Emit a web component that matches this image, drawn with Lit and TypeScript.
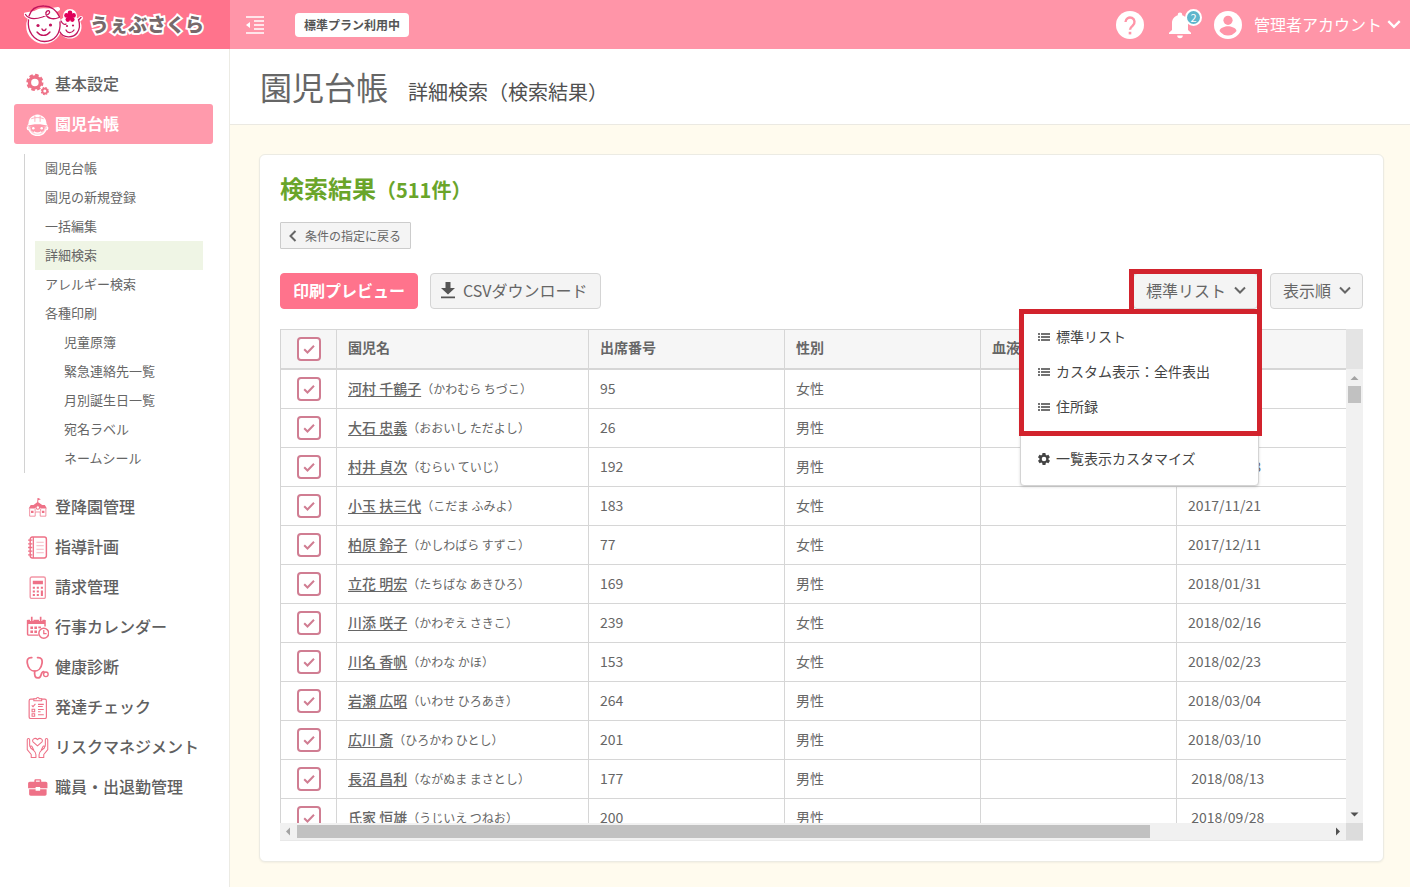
import { LitElement, html, css, svg, nothing, TemplateResult } from "lit";
import { customElement, state } from "lit/decorators.js";
import { classMap } from "lit/directives/class-map.js";

interface Child {
  name: string;
  kana: string;
  no: string;
  sex: string;
  birth: string;
}

const CHILDREN: Child[] = [
  { name: "河村 千鶴子", kana: "かわむら ちづこ", no: "95", sex: "女性", birth: "2017/04/18" },
  { name: "大石 忠義", kana: "おおいし ただよし", no: "26", sex: "男性", birth: "2017/08/02" },
  { name: "村井 貞次", kana: "むらい ていじ", no: "192", sex: "男性", birth: "2017/10/28" },
  { name: "小玉 扶三代", kana: "こだま ふみよ", no: "183", sex: "女性", birth: "2017/11/21" },
  { name: "柏原 鈴子", kana: "かしわばら すずこ", no: "77", sex: "女性", birth: "2017/12/11" },
  { name: "立花 明宏", kana: "たちばな あきひろ", no: "169", sex: "男性", birth: "2018/01/31" },
  { name: "川添 咲子", kana: "かわぞえ さきこ", no: "239", sex: "女性", birth: "2018/02/16" },
  { name: "川名 香帆", kana: "かわな かほ", no: "153", sex: "女性", birth: "2018/02/23" },
  { name: "岩瀬 広昭", kana: "いわせ ひろあき", no: "264", sex: "男性", birth: "2018/03/04" },
  { name: "広川 斎", kana: "ひろかわ ひとし", no: "201", sex: "男性", birth: "2018/03/10" },
  { name: "長沼 昌利", kana: "ながぬま まさとし", no: "177", sex: "男性", birth: " 2018/08/13" },
  { name: "氏家 恒雄", kana: "うじいえ つねお", no: "200", sex: "男性", birth: " 2018/09/28" },
];

const SUB_MENU = [
  { label: "園児台帳" },
  { label: "園児の新規登録" },
  { label: "一括編集" },
  { label: "詳細検索", current: true },
  { label: "アレルギー検索" },
  { label: "各種印刷" },
  { label: "児童原簿", nested: true },
  { label: "緊急連絡先一覧", nested: true },
  { label: "月別誕生日一覧", nested: true },
  { label: "宛名ラベル", nested: true },
  { label: "ネームシール", nested: true },
];

const icon = (cls: string, box: string, body: TemplateResult | unknown) =>
  html`<svg class=${cls} viewBox=${box} aria-hidden="true">${body}</svg>`;

const gear = svg`<path fill="currentColor" fill-rule="evenodd" d="M19.4 13c.1-.3.1-.7.1-1s0-.7-.1-1l2.100-1.600c.2-.2.2-.4.100-.6l-2-3.500c-.1-.2-.4-.3-.6-.2l-2.500 1c-.5-.4-1.100-.7-1.700-1l-.4-2.600c0-.3-.2-.5-.5-.5h-4c-.3 0-.5.2-.5.400l-.4 2.700c-.6.2-1.100.6-1.700 1l-2.500-1c-.2-.1-.5 0-.6.200l-2 3.500c-.1.2-.1.500.1.600L4.500 11c0 .3-.1.700-.1 1s0 .7.1 1l-2.100 1.600c-.2.2-.2.400-.1.600l2 3.500c.1.200.4.300.6.200l2.500-1c.5.400 1.100.7 1.700 1l.4 2.600c0 .3.2.5.5.5h4c.3 0 .5-.2.5-.4l.4-2.700c.6-.2 1.100-.6 1.700-1l2.500 1c.2.100.5 0 .6-.2l2-3.500c.1-.2.1-.5-.1-.6zM12 8.200a3.800 3.800 0 1 1 0 7.600 3.800 3.800 0 0 1 0-7.600z"/>`;

const ICONS: Record<string, unknown> = {
  settings: svg`
    <g fill="none" stroke="currentColor">
      <circle cx="8.500" cy="9" r="5.200" stroke-width="3.200"/>
      <circle cx="8.500" cy="9" r="7.200" stroke-width="2" stroke-dasharray="3.400 2.255"/>
      <circle cx="18" cy="17.300" r="2.300" stroke-width="1.700"/>
      <circle cx="18" cy="17.300" r="3.300" stroke-width="1.200" stroke-dasharray="1.600 .992"/>
    </g>`,
  child: svg`
    <path fill="currentColor" d="M2.300 10.500C2.500 5 6 2 11 1.500c5 .5 8.500 3.500 8.700 9l1.300 1.700c-6-2-14-2-20 0z"/>
    <path d="M8.500 2.500v6M13.500 2.500v6M5 5.500c4-1.500 8-1.500 12 0" stroke="#ff9aac" stroke-width=".7" fill="none"/>
    <path d="M2.500 13c-1.700 0-1.800 3 .5 3.200C4.500 19.500 7.500 21.500 11 21.500s6.500-2 8-5.300c2.300-.2 2.200-3.200.5-3.200" fill="currentColor" fill-opacity=".55" stroke="currentColor" stroke-width="1.300"/>
    <path d="M4 13.500c2-1.800 12-1.800 14 0l-1 3c-2 3-10 3-12 0z" fill="#ff9aac"/>
    <circle cx="7" cy="14.700" r="1.200" fill="currentColor"/><circle cx="15" cy="14.700" r="1.200" fill="currentColor"/>
    <path d="M7.500 18c2 1.500 5 1.500 7 0" fill="none" stroke="currentColor" stroke-width="1.200"/>`,
  school: svg`
    <path fill="currentColor" d="M11 2h.7l2.500 1.100-2.500 1V6l3.800 2.700H18l2 3.300h-5.500L11.300 9.500 8 12H2.500l2-3.300h2.700L10.700 6z"/>
    <path fill="none" stroke="currentColor" stroke-opacity=".8" stroke-width=".9" d="M3.500 12v7.300h5.300v-4h4.800v4H19V12M8.700 12v3M14 12v3"/>
    <path fill="currentColor" d="M4.800 14h2.400v2.200H4.800zM15.200 14h2.400v2.200h-2.400z"/>
    <circle cx="11.300" cy="11" r="1.700" fill="#fff" stroke="currentColor"/>`,
  notebook: svg`
    <rect x="4" y="1" width="15.500" height="20" rx="2" fill="none" stroke="currentColor" stroke-width="1.400"/>
    <path d="M7 1v20M2 4h4M2 7.500h4M2 11h4M2 14.500h4M2 18h4" fill="none" stroke="currentColor" stroke-width="1.200"/>
    <path d="M10 6h7M10 9.300h7M10 12.700h7M10 16h7" stroke="currentColor" stroke-opacity=".6" stroke-width=".8"/>`,
  calculator: svg`
    <rect x="4" y="1" width="14.500" height="20.500" rx="1.500" fill="none" stroke="currentColor" stroke-opacity=".75" stroke-width="1.300"/>
    <path fill="currentColor" d="M6.500 4.500h9.700V8H6.500zM6.500 10.300h2v2h-2zM10.300 10.300h2v2h-2zM14.200 10.300h2v2h-2zM6.500 13.800h2v2h-2zM10.300 13.800h2v2h-2zM6.500 17.200h2v2h-2zM10.300 17.200h2v2h-2zM14.200 13.800h2v5.400h-2z"/>`,
  calendar: svg`
    <path d="M12 18.300H2.500a1 1 0 0 1-1-1V4.500h16.700V10" fill="none" stroke="currentColor" stroke-width="1.400"/>
    <path fill="currentColor" d="M1.500 3.500h16.700v4.200H1.500zM4.200 10h2.500v2.500H4.200zM8 10h2.500v2.500H8zM11.800 10h2.500v1.800h-2.500zM4.200 13.800h2.500v2.500H4.200zM8 13.800h2.500v2.500H8z"/>
    <path d="M5.500 .8v4M14 .8v4" stroke="#fff" stroke-width="3.200"/><path d="M5.500 .8v4M14 .8v4" stroke="currentColor" stroke-width="1.600"/>
    <circle cx="17" cy="16.500" r="4.700" fill="#fff" stroke="currentColor" stroke-width="1.400"/>
    <path d="M17 13.500v3.300h2.700" fill="none" stroke="currentColor" stroke-width="1.200"/>`,
  stethoscope: svg`
    <g fill="none" stroke="currentColor" stroke-width="1.700" stroke-linecap="round">
      <path d="M5.500 1.500C1.500 1.200.8 4 1.300 7c.7 4.500 3.500 7.500 7 7.500s6.300-3 7-7.500c.5-3-.2-5.800-4.200-5.500"/>
      <path d="M8.300 14.500c-.5 5 .7 6.500 3.200 6.500 4 0 2-6 5.500-6"/>
      <circle cx="19" cy="17.500" r="2.200" stroke-width="1.300"/>
    </g>`,
  checklist: svg`
    <rect x="3" y="3" width="16.500" height="18.500" rx="1.500" fill="none" stroke="currentColor" stroke-width="1.100"/>
    <path d="M7.500 4.500V2.700H10a1.300 1.300 0 0 1 2.600 0H15v1.800z" fill="#fff" stroke="currentColor"/>
    <path d="M5.500 9l1.200 1.200L9 7.500M11.500 8H17M11.500 10H16M11.500 13H17M11.500 15H14M11.500 18H17" fill="none" stroke="currentColor"/>
    <path d="M5.800 12.700h2.500v2.300H5.800zM5.800 17h2.500v2.300H5.800z" fill="none" stroke="currentColor"/>`,
  hands: svg`
    <g fill="none" stroke="currentColor" stroke-width="1" stroke-linejoin="round">
      <path d="M11 9.500 6.700 5.600C5.200 3.500 8.500.8 11 3.500c2.500-2.700 5.800 0 4.300 2.100z"/>
      <path d="M5 20.500v-2.800L1.200 13V3.500c0-1.500 2.300-1.500 2.300 0V9l1 2.500 3 2.500c1.500 1.300 2 2.500 2 4v2.500zM3.500 10.500c1-1.500 2-.8 2.500 0l1.500 3"/>
      <path d="M17 20.500v-2.800l3.800-4.700V3.500c0-1.500-2.300-1.500-2.300 0V9l-1 2.500-3 2.500c-1.500 1.300-2 2.500-2 4v2.500zM18.500 10.500c-1-1.500-2-.8-2.500 0L14.500 13.500"/>
    </g>`,
  briefcase: svg`
    <path fill="currentColor" fill-rule="evenodd" d="M8 5.500V4.200C8 3.400 8.600 3 9.300 3h4c.7 0 1.300.4 1.300 1.200v1.300h4.200c1 0 1.700.7 1.700 1.700v4.500h-7v-1.200H9.200v1.200H2V7.200c0-1 .7-1.700 1.700-1.700zm1.500 0h3.600V4.400H9.500z"/>
    <path fill="currentColor" d="M3 12.700h6.200V14h4.300v-1.300h6.200v4.600c0 1-.6 1.500-1.500 1.500H4.500c-.9 0-1.500-.5-1.500-1.500z"/>`,
};

const MAIN_MENU = [
  { label: "登降園管理", icon: "school" },
  { label: "指導計画", icon: "notebook" },
  { label: "請求管理", icon: "calculator" },
  { label: "行事カレンダー", icon: "calendar" },
  { label: "健康診断", icon: "stethoscope" },
  { label: "発達チェック", icon: "checklist" },
  { label: "リスクマネジメント", icon: "hands" },
  { label: "職員・出退勤管理", icon: "briefcase" },
];

const chevronDown = icon("chevron", "0 0 14 14", svg`<path d="M2 4.500 7 9.500 12 4.500" fill="none" stroke="currentColor" stroke-width="2"/>`);
const listIcon = icon("menu-icon", "0 0 12 12", svg`<path d="M0 3h2M3 3h9M0 6h2M3 6h9M0 9h2M3 9h9" stroke="currentColor" stroke-width="1.400" fill="none"/>`);

const base = css`
  :host { font-family: "Noto Sans CJK JP", "Noto Sans", sans-serif; color: #666; }
  * { box-sizing: border-box; }
  a { color: inherit; text-decoration: none; }
  button { font: inherit; color: inherit; margin: 0; cursor: pointer; }
  svg { display: block; flex: none; }
`;

@customElement("top-bar")
class TopBar extends LitElement {
  static styles = [base, css`
    :host { display: flex; height: 49px; background: #ff95a8; color: #fff; }
    .brand { width: 230px; flex: none; display: flex; align-items: center; gap: 6px; padding-left: 24px; background: #ff738c; }
    .faces { width: 60px; height: 44px; }
    .brand-name {
      padding-bottom: 2px; font-size: 19px; font-weight: 900; line-height: 28px; color: #77696b;
      -webkit-text-stroke: 4px #fff; paint-order: stroke fill; white-space: nowrap;
    }
    .bar { flex: 1; display: flex; align-items: center; padding: 0 8px 0 16px; }
    .plain { border: 0; background: none; padding: 0; display: flex; align-items: center; }
    .collapse { width: 18px; height: 18px; }
    .plan { margin-left: 31px; padding: 0 9px; border-radius: 4px; background: #fff; color: #555; font-size: 12px; font-weight: 700; line-height: 24px; }
    .tools { margin-left: auto; display: flex; align-items: center; }
    .round { width: 28px; height: 28px; }
    .bell { position: relative; margin: 0 22px 0 24px; }
    .bell svg { width: 24px; height: 28px; }
    .count {
      position: absolute; top: -2px; right: -10px; width: 17px; height: 17px; border: 2px solid #fff; border-radius: 50%;
      background: #5fb6cc; font-size: 11px; line-height: 13px; text-align: center;
    }
    .account { margin-left: 12px; padding-bottom: 2px; gap: 4px; font-size: 16px; line-height: 24px; }
    .account .chevron { width: 16px; height: 16px; }
  `];

  render() {
    return html`
      <a class="brand" href="#">
        ${icon("faces", "0 0 60 44", svg`
          <g stroke="#fff" stroke-width="4" fill="#fff" stroke-linejoin="round">
            <circle cx="20" cy="23" r="15.800"/><circle cx="46" cy="24" r="9.500"/>
            <path d="M1.500 11.500C6 17 14 16.500 20 14L34 6z"/><circle cx="46" cy="13" r="5"/>
            <path d="M55 17l2-2" stroke-linecap="round"/>
          </g>
          <g fill="none" stroke="#c2155e" stroke-width="1.300" stroke-linecap="round">
            <path d="M4.500 17C3 28 10 38.500 20.500 38.500S37 30 36 19"/>
            <path d="M1.500 11.500c4 6 11 4.500 17 2.500 5-2 8-3.500 7-5.500-1.200-2-4.500 0-3.500 3 1.300 4 7 5.500 13 3"/>
            <path d="M5 13C7 6 13 2.800 20 3c7 0 13 4.500 15.500 11"/>
            <path d="M36 29c3 6 13 6.500 17 1 3-4 3-9 1.500-13.500M37 18c1.500 3 3.500 4 5 3M54.500 17l2.500-2.500"/>
            <path d="M13 29c3.500 4.500 9.500 4.500 13 0M18 26c.5 2 3.500 2 4 0M42 27c1.500 3.500 6 3.500 8 0"/>
          </g>
          <g fill="#c2155e"><circle cx="14" cy="22.500" r="1.600"/><circle cx="26.500" cy="22" r="1.600"/><circle cx="43" cy="23" r="1.100"/><circle cx="49" cy="22.500" r="1.100"/></g>
          <g fill="#e0005a"><circle cx="46" cy="9.800" r="2.300"/><circle cx="42.500" cy="12.400" r="2.300"/><circle cx="43.800" cy="16.600" r="2.300"/><circle cx="48.300" cy="16.600" r="2.300"/><circle cx="49.600" cy="12.400" r="2.300"/><circle cx="46" cy="13.500" r="3"/></g>`)}
        <span class="brand-name">うぇぶさくら</span>
      </a>
      <div class="bar">
        <button class="plain" aria-label="メニューを閉じる">
          ${icon("collapse", "0 0 18 18", svg`<path d="M0 1h18M8 5h10M8 9h10M8 13h10M0 17h18" stroke="currentColor" stroke-width="1.500"/><path d="M4 6v6L0 9z" fill="currentColor"/>`)}
        </button>
        <span class="plan">標準プラン利用中</span>
        <div class="tools">
          <button class="plain" aria-label="ヘルプ">
            ${icon("round", "0 0 28 28", svg`<circle cx="14" cy="14" r="14" fill="currentColor"/><path d="M9.500 11a4.500 4.500 0 1 1 7.300 3.500C15 16 14 16.800 14 18.800" fill="none" stroke="#ff95a8" stroke-width="2.400"/><path d="M12.700 20.800h2.600v2.600h-2.600z" fill="#ff95a8"/>`)}
          </button>
          <button class="plain bell" aria-label="お知らせ">
            ${icon("", "0 0 24 28", svg`<path fill="currentColor" d="M12 1.500c-1.300 0-2.200.9-2.200 2.200v.6C6.200 5.300 4 8.500 4 12.300V19l-3 2.800V23h22v-1.200L20 19v-6.700c0-3.800-2.200-7-5.800-8v-.6c0-1.300-.9-2.200-2.200-2.200zM9.200 24.500h5.600a2.800 2.800 0 0 1-5.600 0z"/>`)}
            <span class="count">2</span>
          </button>
          <button class="plain">
            ${icon("round", "0 0 28 28", svg`<circle cx="14" cy="14" r="14" fill="currentColor"/><circle cx="14" cy="9.300" r="4.600" fill="#ff95a8"/><path d="M5.500 20c.5-3.200 5.500-4.700 8.500-4.700s8 1.500 8.500 4.700a10.300 10.300 0 0 1-17 0z" fill="#ff95a8"/>`)}
            <span class="plain account">管理者アカウント ${chevronDown}</span>
          </button>
        </div>
      </div>`;
  }
}

@customElement("side-nav")
class SideNav extends LitElement {
  static styles = [base, css`
    :host { display: block; width: 230px; flex: none; border-right: 1px solid #ecebe4; background: #fff; padding: 15px 16px 40px 14px; }
    .item { display: flex; align-items: center; gap: 6px; height: 40px; padding-left: 12px; border-radius: 3px; font-size: 16px; font-weight: 500; line-height: 24px; color: #606060; white-space: nowrap; }
    .item svg { width: 23px; height: 23px; color: #ee7187; }
    .item span { padding-bottom: 2px; }
    .item.active { background: #ff9aac; color: #fff; font-weight: 700; }
    .item.active svg { color: #fff; }
    .sub { margin: 10px 10px 14px; border-left: 1px solid #d2d2d2; padding-left: 10px; }
    .sub a { display: block; padding: 0 0 2px 10px; font-size: 13px; line-height: 27px; }
    .sub a.nested { padding-left: 29px; }
    .sub a.current { background: #eff5e5; }
  `];

  private item(label: string, name: string, active = false) {
    return html`<a href="#" class=${classMap({ item: true, active })}>${icon("", "0 0 22 22", ICONS[name])}<span>${label}</span></a>`;
  }

  render() {
    return html`<nav>
      ${this.item("基本設定", "settings")}
      ${this.item("園児台帳", "child", true)}
      <div class="sub">
        ${SUB_MENU.map((m: any) => html`<a href="#" class=${classMap({ nested: !!m.nested, current: !!m.current })}>${m.label}</a>`)}
      </div>
      ${MAIN_MENU.map((m) => this.item(m.label, m.icon))}
    </nav>`;
  }
}

@customElement("list-toolbar")
class ListToolbar extends LitElement {
  @state() private open = true;

  static styles = [base, css`
    :host { display: flex; align-items: center; gap: 12px; }
    .btn { display: flex; align-items: center; gap: 7px; height: 36px; padding: 0 10px 2px 12px; border: 1px solid #d4d4d4; border-radius: 4px; background: #f4f4f4; font-size: 16px; line-height: 24px; white-space: nowrap; }
    .primary { padding-right: 12px; background: #ff738c; border-color: #ff738c; color: #fff; font-weight: 700; }
    .download { width: 14px; height: 18px; color: #555; }
    .csv { gap: 8px; padding-left: 10px; padding-right: 12px; }
    .chevron { width: 14px; height: 14px; }
    .right { margin-left: auto; display: flex; gap: 12px; }
    .dropdown { position: relative; }
    .menu { position: absolute; z-index: 2; top: 40px; right: -1px; width: 239px; padding: 5px 0 9px; border: 1px solid #d4d4d4; border-radius: 4px; background: #fff; box-shadow: 0 1px 3px rgba(0, 0, 0, .15); }
    .menu a { display: flex; align-items: center; gap: 6px; padding-left: 17px; font-size: 14px; line-height: 35px; color: #444; }
    .menu hr { margin: 8px 0; border: 0; border-top: 1px solid #ddd; }
    .menu-icon { width: 12px; height: 12px; }
    .mark { position: absolute; z-index: 3; border: 5px solid #d2232d; pointer-events: none; }
    .mark-button { inset: -4px -4px -5px -4px; }
    .mark-list { top: -5px; left: -2px; right: -4px; height: 127px; }
  `];

  render() {
    return html`
      <button class="btn primary">印刷プレビュー</button>
      <button class="btn csv">
        ${icon("download", "0 0 14 18", svg`<path fill="currentColor" d="M4.500 1h5v6H14l-7 6.500L0 7h4.500zM0 15.500h14v1.800H0z"/>`)}
        CSVダウンロード
      </button>
      <div class="right">
        <div class="dropdown">
          <button class="btn" aria-haspopup="menu" aria-expanded=${this.open} @click=${() => (this.open = !this.open)}>標準リスト ${chevronDown}</button>
          ${this.open ? html`
            <div class="menu">
              <a href="#">${listIcon}標準リスト</a>
              <a href="#">${listIcon}カスタム表示：全件表出</a>
              <a href="#">${listIcon}住所録</a>
              <hr />
              <a href="#">${icon("menu-icon", "2 2 20 20", gear)}一覧表示カスタマイズ</a>
              <span class="mark mark-list"></span>
            </div>
            <span class="mark mark-button"></span>` : nothing}
        </div>
        <button class="btn" aria-haspopup="menu">表示順 ${chevronDown}</button>
      </div>`;
  }
}

@customElement("child-table")
class ChildTable extends LitElement {
  static styles = [base, css`
    :host { display: grid; grid-template-columns: minmax(0, 1fr) 17px; border-bottom: 1px solid #e8e8e8; }
    .view { overflow: auto; scrollbar-width: none; height: 494px; border-left: 1px solid #d4d4d4; }
    table { border-collapse: separate; border-spacing: 0; table-layout: fixed; width: 1287px; }
    .c-check { width: 56px; }
    .c-name { width: 252px; }
    .c-std { width: 196px; }
    th, td { padding: 0 11px 2px; border-right: 1px solid #d6d6d6; border-bottom: 1px solid #d6d6d6; font-size: 14px; line-height: 20px; text-align: left; white-space: pre; }
    th { height: 41px; padding-bottom: 4px; border-top: 1px solid #d6d6d6; border-bottom-width: 2px; background: #f6f6f6; font-weight: 700; }
    td { height: 39px; }
    th.pick, td.pick { padding: 0; }
    td a { text-decoration: underline; text-underline-offset: 2px; font-weight: 500; }
    .kana { font-size: 12px; }
    input {
      appearance: none; display: block; width: 24px; height: 24px; margin: 0 auto; border: 2px solid #d07d92; border-radius: 4px; background: #fff center / 12px 12px no-repeat;
    }
    input:checked { background-image: url("data:image/svg+xml,%3Csvg xmlns='http://www.w3.org/2000/svg' viewBox='0 0 12 12'%3E%3Cpath d='M1.200 6.200 4.500 9.500 11 2.800' fill='none' stroke='%23d07d92' stroke-width='2'/%3E%3C/svg%3E"); }
    .v-side { display: flex; flex-direction: column; }
    .v-head { height: 40px; background: #e4e4e4; }
    .track { display: flex; background: #f1f1f1; }
    .v-track { flex: 1; flex-direction: column; justify-content: space-between; align-items: center; }
    .h-track { height: 17px; justify-content: space-between; align-items: center; }
    .track svg { width: 17px; height: 17px; color: #505050; }
    .track svg.end { color: #a3a3a3; }
    .v-run { flex: 1; width: 13px; }
    .v-thumb { height: 17px; background: #c1c1c1; }
    .h-run { flex: 1; display: grid; grid-template-columns: 19fr 4fr; height: 13px; }
    .h-thumb { background: #c1c1c1; }
    .corner { background: #dcdcdc; }
  `];

  render() {
    return html`
      <div class="view">
        <table>
          <colgroup><col class="c-check" /><col class="c-name" /><col class="c-std" /><col class="c-std" /><col class="c-std" /><col class="c-std" /><col class="c-std" /></colgroup>
          <thead>
            <tr>
              <th class="pick"><input type="checkbox" checked aria-label="すべて選択" /></th>
              <th>園児名</th><th>出席番号</th><th>性別</th><th>血液型</th><th>生年月日</th><th></th>
            </tr>
          </thead>
          <tbody>
            ${CHILDREN.map((c) => html`<tr>
              <td class="pick"><input type="checkbox" checked aria-label=${c.name} /></td>
              <td><a href="#">${c.name}</a><span class="kana">（${c.kana}）</span></td>
              <td>${c.no}</td><td>${c.sex}</td><td></td><td>${c.birth}</td><td></td>
            </tr>`)}
          </tbody>
        </table>
      </div>
      <div class="v-side">
        <div class="v-head"></div>
        <div class="track v-track">
          ${icon("end", "0 0 17 17", svg`<path d="M4.500 11h8l-4-4z" fill="currentColor"/>`)}
          <div class="v-run"><div class="v-thumb"></div></div>
          ${icon("", "0 0 17 17", svg`<path d="M4.500 6.500h8l-4 4z" fill="currentColor"/>`)}
        </div>
      </div>
      <div class="track h-track">
        ${icon("end", "0 0 17 17", svg`<path d="M10 4.500v8l-4-4z" fill="currentColor"/>`)}
        <div class="h-run"><div class="h-thumb"></div></div>
        ${icon("", "0 0 17 17", svg`<path d="M7 4.500v8l4-4z" fill="currentColor"/>`)}
      </div>
      <div class="corner"></div>`;
  }
}

@customElement("app-root")
class AppRoot extends LitElement {
  static styles = [base, css`
    :host { display: flex; flex-direction: column; min-height: 100vh; background: #fffbee; }
    .page { flex: 1; display: flex; }
    main { flex: 1; min-width: 0; }
    .title { display: flex; align-items: baseline; gap: 20px; height: 76px; padding: 13px 30px 0; border-bottom: 1px solid #ebe9e2; background: #fff; }
    h1 { margin: 0; font-size: 32px; line-height: 48px; font-weight: 400; }
    .lead { margin: 0; font-size: 20px; line-height: 30px; color: #505050; }
    .card { margin: 29px 26px 24px 29px; padding: 15px 20px 20px; border: 1px solid #ecebe3; border-radius: 6px; background: #fff; box-shadow: 0 1px 2px rgba(0, 0, 0, .05); }
    h2 { margin: 0; font-size: 24px; line-height: 36px; font-weight: 700; color: #6aa52a; }
    h2 small { font-size: 20px; }
    .back { display: inline-flex; align-items: center; gap: 6px; height: 27px; margin-top: 14px; padding: 0 9px 0 6px; border: 1px solid #ccc; border-radius: 1px; background: #f4f4f4; font-size: 12px; line-height: 18px; }
    .back svg { width: 12px; height: 12px; }
    list-toolbar { margin: 24px 0 20px; }
  `];

  render() {
    return html`
      <top-bar></top-bar>
      <div class="page">
        <side-nav></side-nav>
        <main>
          <header class="title"><h1>園児台帳</h1><p class="lead">詳細検索（検索結果）</p></header>
          <section class="card">
            <h2>検索結果<small>（511件）</small></h2>
            <button class="back">${icon("", "0 0 12 12", svg`<path d="M8.500 1 3.500 6l5 5" fill="none" stroke="currentColor" stroke-width="2"/>`)}条件の指定に戻る</button>
            <list-toolbar></list-toolbar>
            <child-table></child-table>
          </section>
        </main>
      </div>`;
  }
}
